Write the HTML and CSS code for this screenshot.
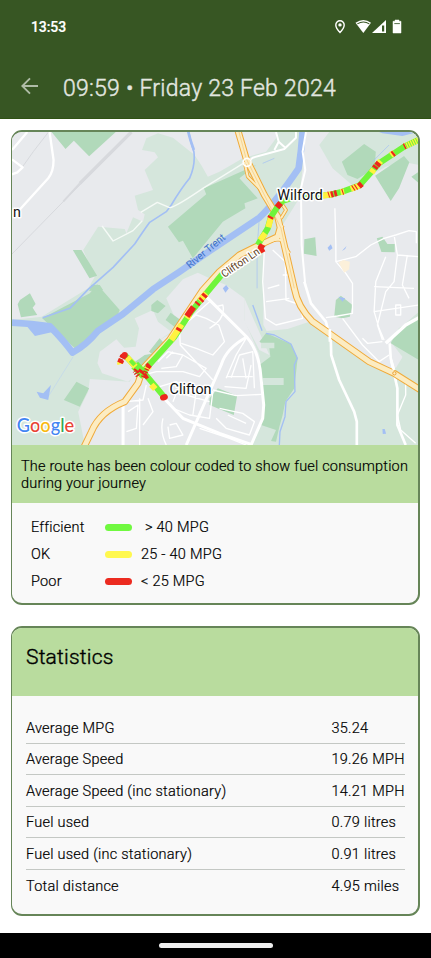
FILE: index.html
```html
<!DOCTYPE html>
<html lang="en">
<head>
<meta charset="utf-8">
<title>Journey</title>
<link rel="stylesheet" href="styles.css">
</head>
<body>
<header class="header">
  <div class="status">
    <span class="clock">13:53</span>
    <svg class="status-icons" width="70" height="16" viewBox="0 0 70 16">
      <path d="M7 1.700a4.200 4.200 0 0 0-4.200 4.200C2.800 9 7 13.400 7 13.400S11.200 9 11.200 5.900A4.200 4.200 0 0 0 7 1.700z" fill="none" stroke="#fff" stroke-width="1.400"/>
      <circle cx="7" cy="5.900" r="1.700" fill="#fff"/>
      <path d="M22.500 3.800Q30.500-1.800 38 3.800L30.300 14z" fill="#fff"/>
      <path d="M24.300 4.900Q30.500 1.200 36.300 4.900" fill="none" stroke="#375623" stroke-width="1.100"/>
      <path d="M39 14 53 1v13z" fill="#fff"/>
      <path d="M49 6.500h2.200v6H49z" fill="#375623"/>
      <path d="M60 2.300h2V1h4v1.300h2V14h-8z" fill="#fff" stroke="#fff" stroke-width=".5"/>
      <path d="M61.300 4.600h5.600" stroke="#55704a" stroke-width="1"/>
    </svg>
  </div>
  <div class="titlebar">
    <svg class="back" width="18" height="18" viewBox="0 0 18 18"><path d="M17 9H1.500M9 1.300 1.300 9 9 16.700" fill="none" stroke="#afbca7" stroke-width="1.900"/></svg>
    <h1>09:59 • Friday 23 Feb 2024</h1>
  </div>
</header>
<main>
  <section class="card route-card">
    <svg class="map" viewBox="6 21 1221 939" preserveAspectRatio="none">
      <path fill="#e8eaed" d="M0 0h1240v970H0z"/>
      <g fill="#d5e6dc">
        <path d="M265 305 345 312 350 325 370 277 400 290 405 268 385 255 375 212 430 195 405 135 445 97 435 82 397 75 410 40 445 25 490 38 555 90 575 120 595 155 630 140 700 100 770 80 800 40 800 21H885L880 130 870 220 820 300 762 375V600L772 618 835 612 900 590 960 625 1080 710 1150 745 1230 790V960H725L760 870V800L750 690 705 585V520L650 480 600 460 565 443 520 463 470 520 510 610 450 645 420 680 385 695V720L360 770 240 762 235 800 205 860 225 960H6V585L95 575 235 490 255 455 220 375z"/>
        <path d="M930 60 960 21H1230V120L1180 110 1130 125 1060 165 1040 190 970 130z"/>
        <path d="M1180 695 1145 650 1160 620 1230 560V790L1150 740z"/>
      </g>
      <g fill="#e8eaed">
        <path d="M270 680 320 643 343 668 378 665 388 610 375 580 430 555 445 590 485 620 450 645 410 690 385 700 380 750 355 770 277 745 263 715z"/>
        <path d="M480 670 520 620 600 500 670 500 700 600 740 700 755 860 715 960H230L330 830 380 780z"/>
        <path d="M750 675 705 590V520L780 690zM1145 690 1180 697 1160 730z"/>
      </g>
      <g fill="#b1d9ba">
        <path d="M125 21H318L238 94 192 47 167 72zM189 375H215L262 452 239 460zM583 190 740 120 690 160 745 220 705 235 708 250 640 290 550 400 520 347 508 352 475 305 590 208z"/>
        <path d="M30 525 60 505 77 537 68 548 82 570 33 577 23 538zM97 580 240 505 262 478 330 555 320 580 195 670zM425 540 443 525 468 543 445 565 425 558zM468 585 483 563 513 585 500 610zM418 680 450 640 468 660 440 695zM162 825 200 770 238 790 210 845zM370 715 405 690 460 680 400 760z"/>
        <path d="M998 110 1065 57 1100 80 1097 130 1045 162 1015 150zM1098 152 1185 93 1201 112 1170 190 1145 228zM885 343 918 337 922 393 884 386zM1103 340 1120 335 1135 357 1157 357V382L1117 381zM1207 155 1230 140V175zM245 479 270 480 280 495 238 498z"/>
        <path d="M975 575 980 525 995 512 1030 540 1022 575 1000 580zM750 650 770 624 845 657 865 700 855 790 828 830 820 870 810 905 800 950 785 948 800 915 755 900 763 860 750 720 783 695 780 670zM1145 655 1170 610 1230 575V705zM600 820 625 790 683 812 673 870 600 840z"/>
      </g>
      <path fill="#d5e6dc" d="M755 653H795V670H755zM760 759H823V780H760z"/>
      <g fill="none" stroke="#a3bff4" stroke-linejoin="round">
        <path d="M537 15Q540 40 553 80 558 120 540 160 515 190 485 240L470 260 420 292Q400 320 375 357L310 427 235 493 180 550 98 578" stroke-width="5"/>
        <path d="M535 15Q540 40 553 75" stroke-width="8"/>
        <path d="M6 593 65 597 120 604 Q165 650 188 683 230 660 265 617L340 567 430 493 510 440 600 378 750 278 Q800 230 868 130 877 70 880 15" stroke-width="20"/>
        <path d="M730 540 758 617M770 625 795 630 845 657 864 700 855 720 857 800 830 830 827 875 812 920 810 960" stroke-width="4"/>
        <path d="M743 370V490M750 275 745 345M795 100 760 115M1140 60 1090 110" stroke-width="2"/>
        <path d="M190 695 115 815" stroke="#b9d0f3" stroke-width="1.500"/>
      </g>
      <path fill="#a3bff4" d="M45 597 75 633 125 622 165 655 120 600zM80 800 100 805 123 780 115 825 90 818zM1110 21H1227L1180 33 1120 25zM640 490 650 480 658 490 648 503zM955 368 965 358 970 370 960 377zM998 378 1012 363 1008 372zM988 515 1008 520 1000 530zM1120 912 1127 912 1131 926 1121 927z"/>
      <g fill="none" stroke="#d7d9dd">
        <path d="M6 387 160 230 365 25" stroke-width="3"/><path d="M160 230 210 175" stroke-width="6"/><path d="M210 175 365 21" stroke-width="10"/><path d="M115 22 70 80 38 125" stroke-width="3"/>
      </g>
      <g fill="none" stroke="#fff" stroke-linejoin="round" stroke-width="4">
        <path d="M119 21 131 105Q131 140 115 160L22 262M52 21 6 75M6 103 38 127 22 142 6 148" stroke-width="7"/>
        <path d="M277 303 310 348 370 317 397 288M393 262 443 232 480 248 Q500 245 580 190L705 113" stroke-width="4" stroke="#f5faf6"/>
        <path d="M713 112 730 98 825 72 860 38V21M800 21 808 50 828 68M808 50 795 75" stroke-width="6"/>
        <path d="M890 21 880 80 888 135 875 190 877 360 888 480" stroke-width="6"/>
        <path d="M885 470 905 535 950 590 965 650 966 690 990 765 1035 860 1043 890V960M1142 655 1145 700 1165 790V900L1190 960" stroke-width="8"/>
        <path d="M977 250 980 360 980 410 1040 395 1085 360 1125 340 1160 330 1200 317 1222 320 1222 355M980 410 1010 445 1030 475V565L985 573 950 578M1155 330 1165 390 1155 470 1130 500 1105 600 1120 645M1165 390 1230 395M1130 395 1100 470 1095 560 1110 610 1125 645M1095 485 1215 490M1195 390 1180 480 1200 520M1095 560 1230 540M1060 640 1075 655 1120 650M1000 580 1060 660 1110 710 1140 690M1190 770V810L1165 870 1175 915 1220 955"/>
        <path d="M1130 655 1190 600 1230 578" stroke-width="10"/>
        <path d="M765 375 760 470 768 580 800 600 880 580 875 540 830 525 828 410 790 375M820 450 850 450M770 530 840 520M775 490 810 480M1160 540H1175V570H1160z"/>
        <path d="M590 515 712 636Q750 680 755 760L763 840 760 880 725 960M712 636Q650 670 635 720L530 960M463 820 520 880 630 925 725 958M340 840V960" stroke-width="9"/>
        <path d="M600 530 510 610 512 660 610 765M510 610 560 570 590 580 628 600M600 610Q650 580 640 540L620 545M628 600 645 650 610 690 560 670 515 655M445 710 475 680 520 690 500 725 455 730M470 700 490 680M400 750 440 740 520 740 570 755 590 730 520 690M450 785 500 770 530 790 610 800 600 880 540 870 490 850M610 795 680 812 757 808M650 760 680 690 710 640M650 755H730M665 758 690 690 730 680 735 790M710 760 700 700M725 720 710 790 645 785M560 800 550 870M510 780 490 830M630 850 700 865 735 890 720 930 650 910 620 880M655 870 710 895M350 830 400 825 410 780M355 860 385 840 380 910 350 920M390 820V960M460 880Q450 920 470 960M480 900 500 895 520 930 480 940 475 905M415 820 430 860 400 900M530 810 600 830M570 910 660 940 710 960"/>
      </g>
      <g fill="none" stroke-linejoin="round">
        <path d="M685 15 710 100 765 210 805 275 820 340 855 490Q865 545 910 590L1080 710 1155 745 1235 795M815 300 805 335 740 365 690 390 630 440 580 495 540 555 480 645 400 730 385 775 345 830Q270 860 245 920L223 965" stroke="#f0aa39" stroke-width="21"/>
        <path d="M705 110 715 155 770 210M820 240 830 255 815 280M755 360Q795 340 815 345L840 385" stroke="#f0aa39" stroke-width="11"/>
        <path d="M685 15 710 100 765 210 805 275 820 340 855 490Q865 545 910 590L1080 710 1155 745 1235 795M815 300 805 335 740 365 690 390 630 440 580 495 540 555 480 645 400 730 385 775 345 830Q270 860 245 920L223 965" stroke="#fcecc2" stroke-width="15"/>
        <path d="M705 110 715 155 770 210M820 240 830 255 815 280M755 360Q795 340 815 345L840 385" stroke="#fcecc2" stroke-width="6"/>
        <path d="M687 15 710 100 765 210 815 310 855 490" stroke="#f3c778" stroke-width="2"/>
        <path d="M962 612V650M1146 705 1155 735" stroke="#fff" stroke-width="8"/>
        <circle cx="713" cy="112" r="12" stroke="#fff" stroke-width="5"/>
        <circle cx="1156" cy="745" r="5" stroke="#eaa132" stroke-width="3"/>
      </g>
      <path fill="#fcf0da" d="M988 412 1003 405 1022 410 1020 433 1005 443z"/>
      <g fill="none" stroke-width="18">
        <path d="M1228 45 1185 65 1110 115 1050 182 1000 200 960 210 870 212 820 228 805 245 785 275 775 310 745 360M640 445 590 505 545 560 495 635 400 740 378 725 345 690M400 740 465 817" stroke="#70f53a" stroke-linejoin="round"/>
        <path d="M375 720 405 752" stroke="#70f53a" stroke-width="28"/>
        <path d="M1228 45 1185 65" stroke="#fff23f" stroke-dasharray="4 3"/>
        <path d="M1155 83 1145 90M1115 108 1106 118M1094 133 1087 143M1050 182 1025 192M1005 199 994 201M968 208 940 212M785 275 777 307M768 325 752 345M590 505 570 527M540 568 532 580M516 598 485 645M420 723 410 733M377 725 352 697M425 779 437 792M332 718 330 710" stroke="#fff23f"/>
        <path d="M1189 63 1185 65M1155 84 1150 88M1110 113 1103 122M1101 123 1096 130M1058 176 1049 184M1042 185 1039 187M1034 188 1031 190M1002 200 999 201M983 204 975 206M972 207 965 209M960 208 957 209M814 234 803 247M785 274 782 280M588 508 582 515M578 522 573 527M566 533 562 538M552 546 532 574M510 610 506 617M420 719 413 726M397 736 392 743M382 735 378 740M413 750 404 756M331 713 335 704M338 700 343 690" stroke="#ec261d"/>
        <path d="M375 720 362 706" stroke="#70f53a" stroke-width="12"/>
        <path d="M752 363 745 380" stroke="#c9291a" stroke-width="7" stroke-dasharray="6 3"/>
        <path d="M330 713 337 695 350 690M385 753 375 738M400 757 415 725" stroke="#e62518" stroke-width="14" stroke-dasharray="4 4"/>
      </g>
      <g fill="#ec261d"><ellipse cx="463" cy="817" rx="12" ry="9" transform="rotate(-20 463 817)"/><circle cx="345" cy="690" r="9"/><path d="M745 365 752 355 768 363 763 370 768 379 754 386 746 381z"/></g>
      <g class="labels">
        <text class="place" x="9" y="277">n</text>
        <text class="place" x="804" y="225" textLength="137" lengthAdjust="spacingAndGlyphs">Wilford</text>
        <text class="place" x="480" y="807" textLength="126" lengthAdjust="spacingAndGlyphs">Clifton</text>
        <text class="water" transform="translate(541 432) rotate(-40)" textLength="142" lengthAdjust="spacingAndGlyphs">River Trent</text>
        <text class="road" transform="translate(644 459) rotate(-34)" textLength="132" lengthAdjust="spacingAndGlyphs">Clifton Ln</text>
        <text class="google" x="20" y="921" textLength="173" lengthAdjust="spacingAndGlyphs"><tspan fill="#4284f3">G</tspan><tspan fill="#e94335">o</tspan><tspan fill="#f8b912">o</tspan><tspan fill="#4284f3">g</tspan><tspan fill="#34a853">l</tspan><tspan fill="#e94335">e</tspan></text>
      </g>
    </svg>
    <p class="note">The route has been colour coded to show fuel consumption during your journey</p>
    <ul class="legend">
      <li><span class="name">Efficient</span><i class="swatch good"></i><span class="range first">&gt; 40 MPG</span></li>
      <li><span class="name">OK</span><i class="swatch ok"></i><span class="range">25 - 40 MPG</span></li>
      <li><span class="name">Poor</span><i class="swatch poor"></i><span class="range">&lt; 25 MPG</span></li>
    </ul>
  </section>
  <section class="card stats-card">
    <h2>Statistics</h2>
    <dl class="stats">
      <div><dt>Average MPG</dt><dd>35.24</dd></div>
      <div><dt>Average Speed</dt><dd>19.26 MPH</dd></div>
      <div><dt>Average Speed (inc stationary)</dt><dd>14.21 MPH</dd></div>
      <div><dt>Fuel used</dt><dd>0.79 litres</dd></div>
      <div><dt>Fuel used (inc stationary)</dt><dd>0.91 litres</dd></div>
      <div><dt>Total distance</dt><dd>4.95 miles</dd></div>
    </dl>
  </section>
</main>
<footer class="navbar"><span class="handle"></span></footer>
</body>
</html>
```
FILE: styles.css
```css
* { box-sizing: border-box; margin: 0; padding: 0; }
body {
  width: 431px;
  height: 958px;
  display: flex;
  flex-direction: column;
  background: #fff;
  color: #000;
  font-family: Roboto, "Liberation Sans", sans-serif;
  font-size: 14.500px;
  font-weight: 300;
  letter-spacing: .25px;
  -webkit-text-stroke: .2px currentColor;
  overflow: hidden;
}
.header {
  height: 119px;
  background: #375623;
  border-bottom: 1px solid #2f5213;
}
.status {
  display: flex;
  justify-content: space-between;
  align-items: center;
  box-sizing: content-box;
  height: 16px;
  padding: 19px 28px 0 31px;
}
.clock { color: #fff; font-size: 14px; font-weight: 500; letter-spacing: -.1px; }
.titlebar { display: flex; align-items: center; height: 36px; margin-top: 34px; padding-left: 21px; }
.titlebar h1 {
  margin: 2px 0 0 24px;
  color: #e3e7e0;
  font-size: 23px;
  font-weight: 300;
  letter-spacing: .24px;
  -webkit-text-stroke: .4px currentColor;
  white-space: nowrap;
}
.back { margin-top: -2px; }
main { flex: 1; padding: 11px 11px 0; }
.card {
  width: 409px;
  border: 2px solid #668558;
  border-left-width: 1px;
  border-radius: 11px;
  background: #f9f9f9;
  overflow: hidden;
}
.route-card { height: 475px; }
.map { display: block; width: 100%; height: 313px; -webkit-text-stroke: 0; }
.labels text { stroke: #fff; stroke-width: 9px; paint-order: stroke; stroke-linejoin: round; letter-spacing: 0; font-weight: 400; }
.labels .place { font-size: 43px; fill: #111; }
.labels .water { font-size: 32px; fill: #3f72c8; stroke: none; }
.labels .road { font-size: 32px; fill: #5d3d20; }
.labels .google { font-family: Lato, sans-serif; font-size: 56px; font-weight: 500; stroke-width: 9px; }
.note {
  height: 58px;
  padding: 13px 6px 0 9px;
  background: #b9dc9e;
  line-height: 17px;
  letter-spacing: .19px;
}
.legend { list-style: none; padding: 11px 20px 0 19px; }
.legend li { display: flex; align-items: center; height: 27px; }
.name { width: 73.500px; letter-spacing: .18px; }
.swatch { width: 27px; height: 7px; border-radius: 3.500px; margin-right: 9.500px; }
.good { background: #70f940; }
.ok { background: #fff84e; }
.poor { background: #ec2b20; }
.range.first { padding-left: 4px; }
.stats-card { height: 290px; margin-top: 21px; }
.stats-card h2 {
  height: 68px;
  padding: 15px 14px 0;
  background: #b9dc9e;
  font-size: 21px;
  line-height: 28px;
  font-weight: 300;
  letter-spacing: .2px;
  -webkit-text-stroke: .4px currentColor;
}
.stats { padding: 16px 13px 0 14px; }
.stats div { display: flex; height: 31.500px; padding-top: 2px; align-items: center; justify-content: space-between; border-bottom: 1px solid #c4c8c4; }
.stats div:last-child { border-bottom: 0; }
.stats dd { width: 73.500px; white-space: nowrap; }
.navbar { display: flex; justify-content: center; height: 25px; padding-top: 10px; background: #000; }
.handle { width: 114px; height: 5px; border-radius: 3px; background: #eee; }
```
